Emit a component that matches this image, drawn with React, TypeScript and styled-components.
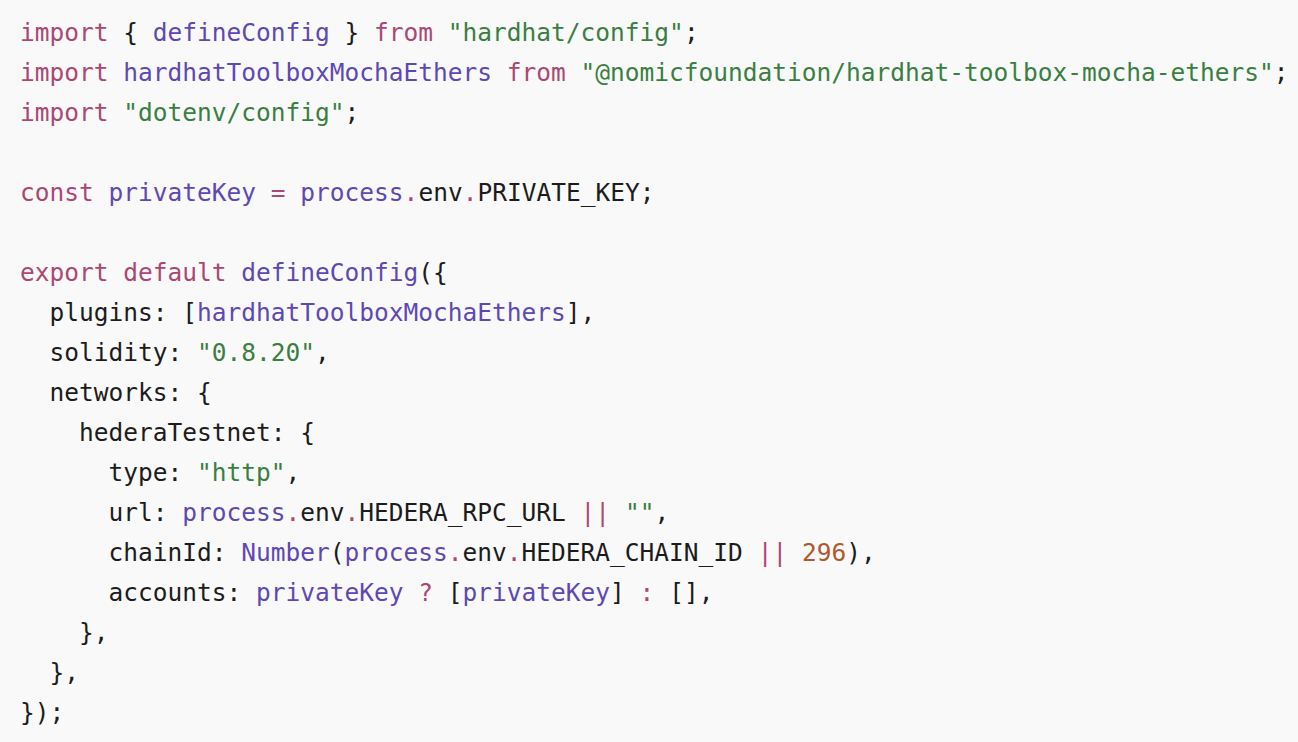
import React from "react";
import styled, { createGlobalStyle } from "styled-components";

const Global = createGlobalStyle`
  html, body { margin: 0; padding: 0; background: #f9f9f9; }
`;

const Block = styled.pre`
  margin: 0;
  width: 1298px;
  height: 742px;
  box-sizing: border-box;
  padding: 13px 0 0 20px;
  background: #f9f9f9;
  font-family: "DejaVu Sans Mono", monospace;
  font-size: 24.5px;
  line-height: 40px;
  color: #1c1c1c;
  overflow: hidden;
`;

const Line = styled.div`
  height: 40px;
  white-space: pre;
`;

type Kind = "kw" | "fn" | "str" | "num" | "op";
const colors: Record<Kind, string> = {
  kw: "#aa4873",
  fn: "#5e48b4",
  str: "#3a7f41",
  num: "#b0582e",
  op: "#aa4873",
};

const Tok = styled.span<{ $k: Kind }>`
  color: ${(p) => colors[p.$k]};
`;

const K = ({ c }: { c: string }) => <Tok $k="kw">{c}</Tok>;
const F = ({ c }: { c: string }) => <Tok $k="fn">{c}</Tok>;
const S = ({ c }: { c: string }) => <Tok $k="str">{c}</Tok>;
const N = ({ c }: { c: string }) => <Tok $k="num">{c}</Tok>;
const O = ({ c }: { c: string }) => <Tok $k="op">{c}</Tok>;

export default function App() {
  return (
    <>
      <Global />
      <Block>
        <Line>
          <K c="import" /> {"{ "}<F c="defineConfig" />{" } "}<K c="from" /> <S c={'"hardhat/config"'} />;
        </Line>
        <Line>
          <K c="import" /> <F c="hardhatToolboxMochaEthers" /> <K c="from" />{" "}
          <S c={'"@nomicfoundation/hardhat-toolbox-mocha-ethers"'} />;
        </Line>
        <Line>
          <K c="import" /> <S c={'"dotenv/config"'} />;
        </Line>
        <Line> </Line>
        <Line>
          <K c="const" /> <F c="privateKey" /> <O c="=" /> <F c="process" />
          <O c="." />env<O c="." />PRIVATE_KEY;
        </Line>
        <Line> </Line>
        <Line>
          <K c="export" /> <K c="default" /> <F c="defineConfig" />({"{"}
        </Line>
        <Line>
          {"  plugins: ["}<F c="hardhatToolboxMochaEthers" />],
        </Line>
        <Line>
          {"  solidity: "}<S c={'"0.8.20"'} />,
        </Line>
        <Line>{"  networks: {"}</Line>
        <Line>{"    hederaTestnet: {"}</Line>
        <Line>
          {"      type: "}<S c={'"http"'} />,
        </Line>
        <Line>
          {"      url: "}<F c="process" /><O c="." />env<O c="." />HEDERA_RPC_URL <O c="||" />{" "}
          <S c={'""'} />,
        </Line>
        <Line>
          {"      chainId: "}<F c="Number" />(<F c="process" /><O c="." />env<O c="." />HEDERA_CHAIN_ID{" "}
          <O c="||" /> <N c="296" />),
        </Line>
        <Line>
          {"      accounts: "}<F c="privateKey" /> <O c="?" /> [<F c="privateKey" />] <O c=":" /> [],
        </Line>
        <Line>{"    },"}</Line>
        <Line>{"  },"}</Line>
        <Line>{"});"}</Line>
      </Block>
    </>
  );
}
